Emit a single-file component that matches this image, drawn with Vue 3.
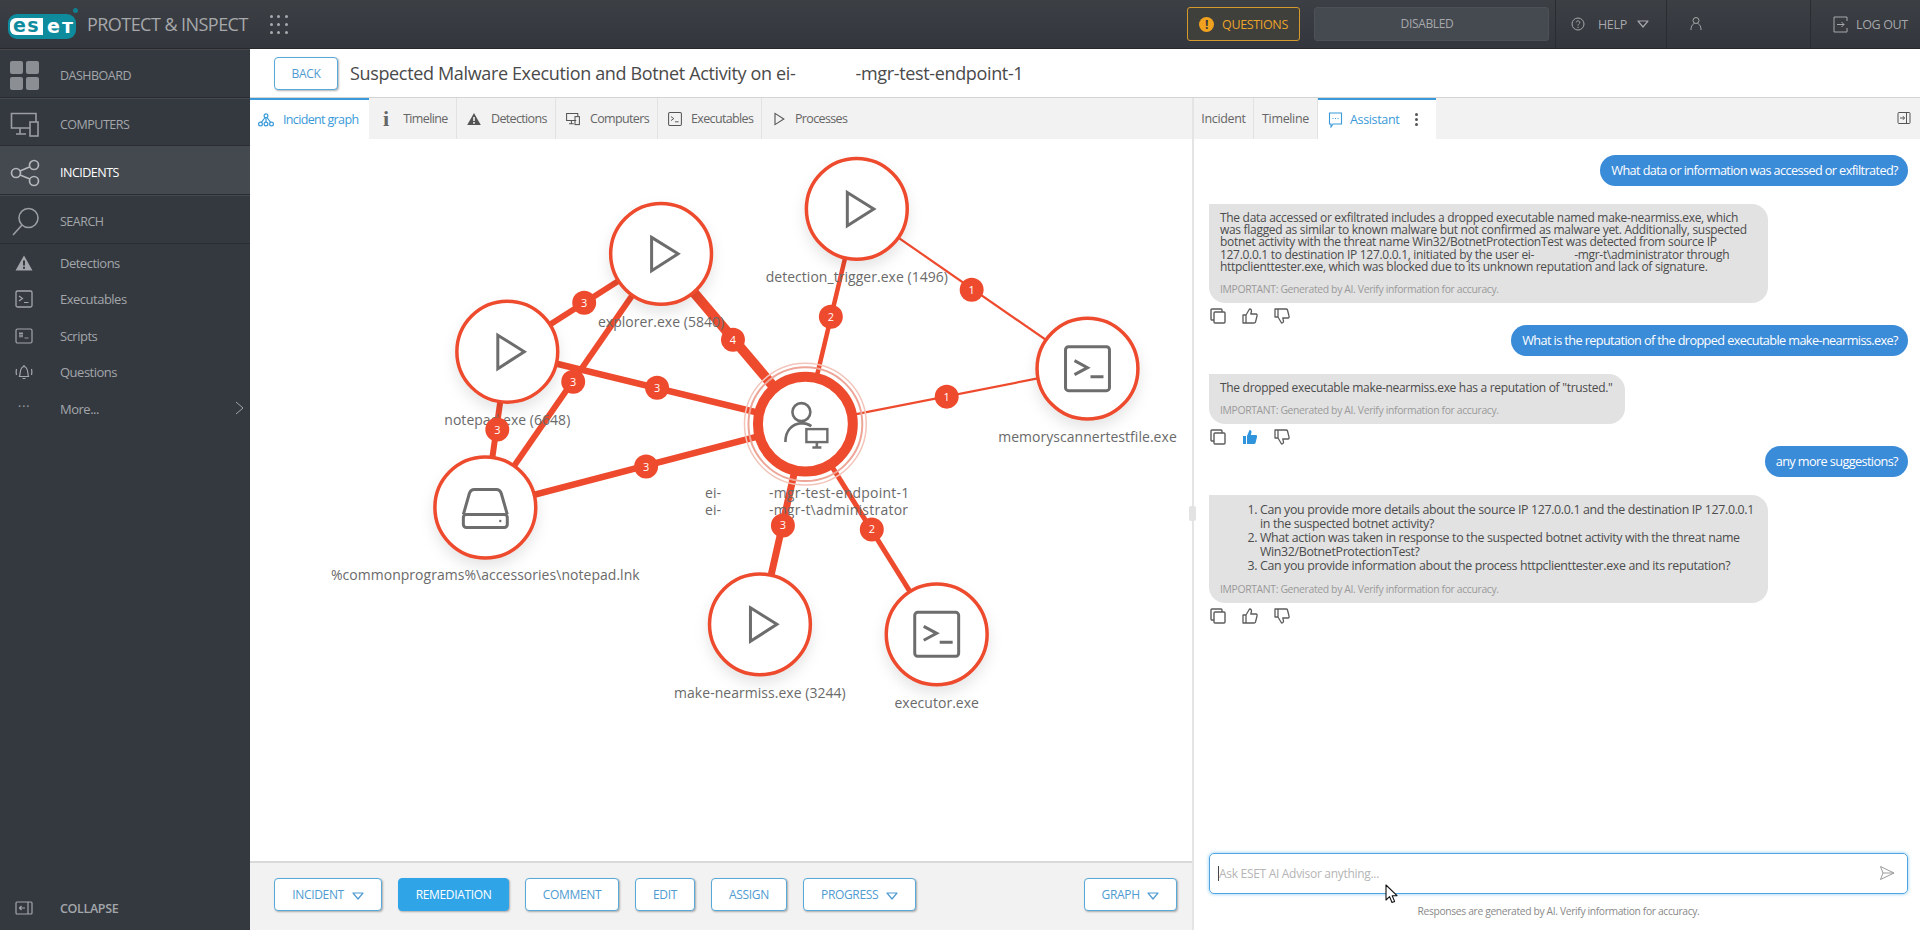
<template>
  <div class="app">
    <!-- shared icons -->
    <svg class="sprite" aria-hidden="true">
      <symbol id="i-alert" viewBox="0 0 20 20"><path d="M10 2.5 L18.5 17.5 H1.5 Z" fill="currentColor" /><path d="M10 7.5 V12.5 M10 13.8 V15.8" stroke="var(--ex, #fff)" stroke-width="2" /></symbol>
      <symbol id="i-term" viewBox="0 0 20 20"><rect x="2" y="2" width="16" height="16" rx="1.5" fill="none" stroke="currentColor" stroke-width="1.3" /><path d="M5 7 L8.5 9.5 L5 12 M10 13.5 H14.5" fill="none" stroke="currentColor" stroke-width="1.2" /></symbol>
      <symbol id="i-computers" viewBox="0 0 20 20"><path d="M14 12 H2 V3 H16 V7 M5 16 H11 M8 12 V16" fill="none" stroke="currentColor" stroke-width="1.3" /><rect x="12.5" y="7" width="5.5" height="10" fill="none" stroke="currentColor" stroke-width="1.3" /></symbol>
      <symbol id="i-play" viewBox="0 0 20 20"><path d="M5 3 L16 10 L5 17 Z" fill="none" stroke="currentColor" stroke-width="1.4" /></symbol>
      <symbol id="i-copy" viewBox="0 0 18 18"><rect x="5" y="5" width="11" height="11" rx="1" fill="#fff" stroke="currentColor" stroke-width="1.4" /><path d="M5 13 H3 a1 1 0 0 1 -1 -1 V3 a1 1 0 0 1 1 -1 H12 a1 1 0 0 1 1 1 V5" fill="none" stroke="currentColor" stroke-width="1.4" /></symbol>
      <symbol id="i-like" viewBox="0 0 18 18"><path d="M2 8 H5 V16 H2 Z M5 8 L8.5 2 C10.5 2 10.8 3.5 10.3 5 L9.8 7 H15 C16 7 16.3 8 16 9 L14.5 15 C14.3 15.7 13.8 16 13 16 H5" fill="none" stroke="currentColor" stroke-width="1.3" stroke-linejoin="round" /></symbol>
      <symbol id="i-like-on" viewBox="0 0 18 18"><path d="M2 8 H5 V16 H2 Z M6 8 L8.5 2 C10.5 2 10.8 3.5 10.3 5 L9.8 7 H15 C16 7 16.3 8 16 9 L14.5 15 C14.3 15.7 13.8 16 13 16 H6 Z" fill="currentColor" /></symbol>
      <symbol id="i-down" viewBox="0 0 12 8"><path d="M1 1 H11 L6 7 Z" fill="none" stroke="currentColor" stroke-width="1.2" stroke-linejoin="round" /></symbol>
    </svg>

    <header class="topbar">
      <div class="logo">
        <span class="logo-white">es</span><span class="logo-rest">eт</span>
        <i class="logo-r"></i>
      </div>
      <span class="product">PROTECT &amp; INSPECT</span>
      <div class="waffle"><i v-for="n in 9" :key="n"></i></div>

      <button class="questions">
        <span class="q-dot">!</span>
        QUESTIONS
      </button>
      <div class="disabled-box">DISABLED</div>
      <div class="top-cell cell-help">
        <svg width="14" height="14" viewBox="0 0 14 14"><circle cx="7" cy="7" r="6" fill="none" stroke="currentColor" /><path d="M5.2 5.4 C5.2 3.4 8.8 3.4 8.8 5.4 C8.8 6.8 7 6.8 7 8.6 M7 9.8 V11" fill="none" stroke="currentColor" /></svg>
        <span>HELP</span>
        <svg class="caret" width="12" height="8"><use href="#i-down" /></svg>
      </div>
      <div class="top-cell cell-user">
        <svg width="12" height="16" viewBox="0 0 12 16"><circle cx="6" cy="4.5" r="3" fill="none" stroke="currentColor" /><path d="M1 14 C1 9.5 3 8 4.5 7.4 M11 14 C11 9.5 9 8 7.5 7.4" fill="none" stroke="currentColor" /></svg>
      </div>
      <div class="top-cell cell-logout">
        <svg width="15" height="17" viewBox="0 0 15 17"><path d="M14 5 V1 H1 V16 H14 V12" fill="none" stroke="currentColor" /><path d="M4 8.5 H11 M8.5 6 L11 8.5 L8.5 11" fill="none" stroke="currentColor" /></svg>
        <span>LOG OUT</span>
      </div>
    </header>

    <div class="body">
      <aside class="sidebar">
        <a class="nav-main">
          <svg class="nav-big" width="30" height="30" viewBox="0 0 30 30"><g fill="#8b8e93"><rect width="13" height="13" rx="2" /><rect x="16" width="13" height="13" rx="2" /><rect y="16" width="13" height="13" rx="2" /><rect x="16" y="16" width="13" height="13" rx="2" /></g></svg>
          DASHBOARD
        </a>
        <a class="nav-main">
          <svg class="nav-big" width="30" height="30" viewBox="0 0 30 30"><g fill="none" stroke="#9a9da1" stroke-width="1.6"><path d="M20 18 H1.5 V3.5 H26 V12 M6 24 H16 M10 18 V24" /><rect x="20" y="12" width="8" height="14" /></g></svg>
          COMPUTERS
        </a>
        <a class="nav-main active">
          <svg class="nav-big" width="30" height="30" viewBox="0 0 30 30"><g fill="none" stroke="#b4b6b9" stroke-width="1.7"><circle cx="6" cy="15" r="4.5" /><circle cx="24" cy="7" r="4.5" /><circle cx="24" cy="23" r="4.5" /><path d="M10 13 L20 8.8 M10 17 L20 21" /></g></svg>
          INCIDENTS
        </a>
        <a class="nav-main">
          <svg class="nav-big" width="30" height="30" viewBox="0 0 30 30"><g fill="none" stroke="#9a9da1" stroke-width="1.6"><circle cx="18.5" cy="11" r="9.5" /><path d="M12 18 L3 28" /></g></svg>
          SEARCH
        </a>
        <a class="nav-sub">
          <svg class="nav-small" width="20" height="20"><use href="#i-alert" /></svg>
          Detections
        </a>
        <a class="nav-sub">
          <svg class="nav-small" width="20" height="20"><use href="#i-term" /></svg>
          Executables
        </a>
        <a class="nav-sub">
          <svg class="nav-small" width="20" height="20" viewBox="0 0 20 20"><rect x="2" y="3" width="16" height="14" rx="1.5" fill="none" stroke="currentColor" stroke-width="1.2" /><path d="M5 7.5 H9 M5 10 H9 M6 6 V11.5 M8 6 V11.5 M10.5 12 H14.5" fill="none" stroke="currentColor" stroke-width=".9" /></svg>
          Scripts
        </a>
        <a class="nav-sub">
          <svg class="nav-small" width="20" height="20" viewBox="0 0 20 20"><g fill="none" stroke="currentColor" stroke-width="1.2"><path d="M5.5 14.5 C6.5 12 5.5 5 10 4.5 C14.5 5 13.5 12 14.5 14.5 Z" /><path d="M10 3 V4.5 M8.5 16.5 H11.5 M2.5 7 C2 9 2 11 2.5 13 M17.5 7 C18 9 18 11 17.5 13" /></g></svg>
          Questions
        </a>
        <a class="nav-sub">
          <span class="nav-small dots">···</span>
          More...
          <svg class="chev" width="9" height="14" viewBox="0 0 9 14"><path d="M1 1 L8 7 L1 13" fill="none" stroke="currentColor" /></svg>
        </a>
        <a class="nav-collapse">
          <svg class="nav-small" width="20" height="20" viewBox="0 0 20 20"><g fill="none" stroke="currentColor" stroke-width="1.2"><rect x="2" y="4" width="16" height="12" rx="1" /><path d="M14 4 V16 M11 10 H5.5 M7.5 8 L5.5 10 L7.5 12" /></g></svg>
          COLLAPSE
        </a>
      </aside>

      <main class="main">
        <div class="titlebar">
          <button class="btn back">BACK</button>
          <h1>Suspected Malware Execution and Botnet Activity on ei-<span class="gap-title"></span>-mgr-test-endpoint-1</h1>
        </div>

        <div class="panes">
          <section class="left">
            <nav class="tabs">
              <a class="tab active t-graph">
                <svg width="16" height="14" viewBox="0 0 16 14"><g fill="none" stroke="currentColor" stroke-width="1.2"><circle cx="8" cy="2.8" r="1.9" /><circle cx="2.5" cy="11" r="1.9" /><circle cx="8" cy="11" r="1.9" /><circle cx="13.5" cy="11" r="1.9" /><path d="M7 4.5 L3.4 9.3 M8 4.6 V9.2 M9 4.5 L12.6 9.3" /></g></svg>
                Incident graph
              </a>
              <a class="tab t-time"><span class="info-i">i</span>Timeline</a>
              <a class="tab t-det"><svg class="tab-ic" width="16" height="16"><use href="#i-alert" /></svg>Detections</a>
              <a class="tab t-comp"><svg class="tab-ic" width="16" height="16"><use href="#i-computers" /></svg>Computers</a>
              <a class="tab t-exe"><svg class="tab-ic" width="16" height="16"><use href="#i-term" /></svg>Executables</a>
              <a class="tab t-proc"><svg class="tab-ic" width="16" height="16"><use href="#i-play" /></svg>Processes</a>
            </nav>

            <div class="graph">
              <svg class="graph-svg" viewBox="250 138 942 723">
                <line v-for="(e, i) in edges" :key="'e' + i" :x1="e[0]" :y1="e[1]" :x2="e[2]" :y2="e[3]" :stroke-width="e[4]" stroke="#ee4a2d" />

                <circle cx="805.5" cy="423.5" r="61" fill="none" stroke="#f3c4ba" stroke-width="1.5" />
                <circle cx="805.5" cy="423.5" r="57" fill="none" stroke="#eea597" stroke-width="2" />
                <circle cx="805.5" cy="423.5" r="47.5" fill="#fff" stroke="#ee4a2d" stroke-width="10" />
                <g transform="translate(805.5 423.5)" fill="none" stroke="#6d6d6d" stroke-width="2.6">
                  <circle cx="-4" cy="-12" r="9" />
                  <path d="M-20 18 C-20 6 -13 0 -4 -1 C0 -1 3 0 6 2" />
                  <rect x="1" y="5" width="21" height="13" stroke-width="2.4" fill="#fff" />
                  <path d="M11.5 18 V23 M7 23.5 H16" />
                </g>

                <g v-for="n in nodes" :key="n.label">
                  <circle class="node" :cx="n.x" :cy="n.y" r="50.5" />
                  <g :transform="`translate(${n.x} ${n.y})`" fill="none" stroke="#6d6d6d" stroke-width="3">
                    <path v-if="n.icon === 'play'" d="M-9.5 -16.5 L17 0 L-9.5 17 Z" />
                    <g v-else-if="n.icon === 'term'">
                      <rect x="-22" y="-22" width="44" height="44" rx="3" />
                      <path d="M-13 -8 L0 -1 L-13 6 M3 8 H16" />
                    </g>
                    <g v-else stroke-linejoin="round">
                      <path d="M-22 7 L-16 -14 C-15 -17 -14 -18 -11 -18 H11 C14 -18 15 -17 16 -14 L22 7" />
                      <rect x="-22" y="7" width="44" height="13" rx="3" />
                      <circle cx="15" cy="13.5" r="1.2" fill="#6d6d6d" stroke="none" />
                    </g>
                  </g>
                  <text class="node-label" :x="n.x" :y="n.ly" text-anchor="middle">{{ n.label }}</text>
                </g>

                <text class="node-label" x="705" y="498">ei-</text>
                <text class="node-label wider" x="769" y="498">-mgr-test-endpoint-1</text>
                <text class="node-label" x="705" y="515">ei-</text>
                <text class="node-label wider" x="769" y="515">-mgr-t\administrator</text>

                <g v-for="(b, i) in badges" :key="'b' + i">
                  <circle :cx="b[0]" :cy="b[1]" r="12" fill="#ee4a2d" />
                  <text class="badge-num" :x="b[0]" :y="b[1] + 4" text-anchor="middle">{{ b[2] }}</text>
                </g>
              </svg>
            </div>

            <div class="actions">
              <button class="btn btn-act a-inc">INCIDENT <svg width="12" height="8"><use href="#i-down" /></svg></button>
              <button class="btn btn-act primary a-rem">REMEDIATION</button>
              <button class="btn btn-act a-com">COMMENT</button>
              <button class="btn btn-act a-edit">EDIT</button>
              <button class="btn btn-act a-ass">ASSIGN</button>
              <button class="btn btn-act a-pro">PROGRESS <svg width="12" height="8"><use href="#i-down" /></svg></button>
              <button class="btn btn-act a-gra">GRAPH <svg width="12" height="8"><use href="#i-down" /></svg></button>
            </div>
          </section>

          <section class="right">
            <nav class="tabs">
              <a class="tab t-r1">Incident</a>
              <a class="tab t-r2">Timeline</a>
              <a class="tab active t-r3">
                <svg width="15" height="16" viewBox="0 0 15 16"><path d="M1.5 1 H13.5 V12 H5 L3 15 V12 H1.5 Z" fill="none" stroke="currentColor" stroke-width="1.1" /><path d="M4.5 6.5 H5.5 M7 6.5 H8 M9.5 6.5 H10.5" stroke="currentColor" /></svg>
                Assistant
                <span class="kebab"><i></i><i></i><i></i></span>
              </a>
              <svg class="pane-toggle" width="14" height="14" viewBox="0 0 14 14"><g fill="none" stroke="#555" stroke-width="1"><rect x="1" y="1.5" width="12" height="11" rx="1" /><path d="M9.5 1.5 V12.5 M3 7 H7.5 M6 5.2 L7.5 7 L6 8.8" /></g></svg>
            </nav>

            <div class="chat">
              <div class="msg-user">What data or information was accessed or exfiltrated?</div>
              <div class="msg-ai wide">
                <p>The data accessed or exfiltrated includes a dropped executable named make-nearmiss.exe, which was flagged as similar to known malware but not confirmed as malware yet. Additionally, suspected botnet activity with the threat name Win32/BotnetProtectionTest was detected from source IP 127.0.0.1 to destination IP 127.0.0.1, initiated by the user ei-<span class="gap-chat"></span>-mgr-t\administrator through httpclienttester.exe, which was blocked due to its unknown reputation and lack of signature.</p>
                <small>IMPORTANT: Generated by AI. Verify information for accuracy.</small>
              </div>
              <div class="feedback">
                <svg width="18" height="18"><use href="#i-copy" /></svg>
                <svg width="18" height="18"><use href="#i-like" /></svg>
                <svg class="flip" width="18" height="18"><use href="#i-like" /></svg>
              </div>

              <div class="msg-user">What is the reputation of the dropped executable make-nearmiss.exe?</div>
              <div class="msg-ai">
                <p>The dropped executable make-nearmiss.exe has a reputation of "trusted."</p>
                <small>IMPORTANT: Generated by AI. Verify information for accuracy.</small>
              </div>
              <div class="feedback">
                <svg width="18" height="18"><use href="#i-copy" /></svg>
                <svg class="liked" width="18" height="18"><use href="#i-like-on" /></svg>
                <svg class="flip" width="18" height="18"><use href="#i-like" /></svg>
              </div>

              <div class="msg-user">any more suggestions?</div>
              <div class="msg-ai wide">
                <ol>
                  <li>Can you provide more details about the source IP 127.0.0.1 and the destination IP 127.0.0.1 in the suspected botnet activity?</li>
                  <li>What action was taken in response to the suspected botnet activity with the threat name Win32/BotnetProtectionTest?</li>
                  <li>Can you provide information about the process httpclienttester.exe and its reputation?</li>
                </ol>
                <small>IMPORTANT: Generated by AI. Verify information for accuracy.</small>
              </div>
              <div class="feedback">
                <svg width="18" height="18"><use href="#i-copy" /></svg>
                <svg width="18" height="18"><use href="#i-like" /></svg>
                <svg class="flip" width="18" height="18"><use href="#i-like" /></svg>
              </div>
            </div>

            <div class="composer">
              <div class="input">
                <span class="caret-bar"></span>
                <span class="placeholder">Ask ESET AI Advisor anything...</span>
                <svg class="send" width="16" height="16" viewBox="0 0 16 16"><path d="M1.5 1.5 L15 8 L1.5 14.5 L4 8 Z M4 8 H15" fill="none" stroke="#9a9a9a" stroke-width="1" stroke-linejoin="round" /></svg>
              </div>
              <p class="disclaimer">Responses are generated by AI. Verify information for accuracy.</p>
            </div>
          </section>
          <span class="split-handle"></span>
        </div>
      </main>
    </div>

    <svg class="cursor" width="14" height="20" viewBox="0 0 14 20"><path d="M1 1 V16 L4.6 12.6 L7 18.5 L9.6 17.4 L7.2 11.8 L12 11.6 Z" fill="#fff" stroke="#111" stroke-width="1.1" stroke-linejoin="round" /></svg>
  </div>
</template>

<script setup>
// page coordinates, the graph svg viewBox starts at 250,138
const center = [805.5, 423.5]

const nodes = [
  { label: 'explorer.exe (5840)', x: 661, y: 253, ly: 326, icon: 'play' },
  { label: 'notepad.exe (6648)', x: 507, y: 351, ly: 424, icon: 'play' },
  { label: '%commonprograms%\\accessories\\notepad.lnk', x: 485, y: 507, ly: 580, icon: 'drive' },
  { label: 'detection_trigger.exe (1496)', x: 857, y: 208, ly: 281, icon: 'play' },
  { label: 'memoryscannertestfile.exe', x: 1088, y: 368, ly: 441, icon: 'term' },
  { label: 'make-nearmiss.exe (3244)', x: 760, y: 624, ly: 698, icon: 'play' },
  { label: 'executor.exe', x: 937, y: 634, ly: 708, icon: 'term' }
]

const edges = [
  [661, 253, 507, 351, 6],
  [661, 253, 485, 507, 6],
  [507, 351, 805.5, 423.5, 6.5],
  [507, 351, 485, 507, 6],
  [485, 507, ...center, 6.5],
  [661, 253, ...center, 10],
  [857, 208, ...center, 4.5],
  [857, 208, 1088, 368, 2.2],
  [1088, 368, ...center, 2.2],
  [760, 624, ...center, 7],
  [937, 634, ...center, 5]
]

const badges = [
  [584, 302, 3],
  [573, 381, 3],
  [657, 387, 3],
  [497, 429, 3],
  [646, 466, 3],
  [733, 339, 4],
  [831, 316, 2],
  [972, 289, 1],
  [947, 396, 1],
  [783, 525, 3],
  [872, 529, 2]
]
</script>

<style>
html, body {
  margin: 0;
  height: 100%;
  overflow: hidden;
  background: #fff;
}
</style>

<style scoped>
.app {
  position: relative;
  width: 1920px;
  height: 930px;
  display: flex;
  flex-direction: column;
  font-family: "Open Sans", "Noto Sans", sans-serif;
  font-size: 12px;
  letter-spacing: -0.35px;
  color: #555;
  overflow: hidden;
}
.sprite {
  position: absolute;
  width: 0;
  height: 0;
}
button {
  font-family: inherit;
  letter-spacing: inherit;
  cursor: pointer;
}

/* top bar */
.topbar {
  flex: 0 0 49px;
  display: flex;
  align-items: center;
  background: linear-gradient(#3c3f44, #33363c);
  border-bottom: 1px solid #26282c;
  box-sizing: border-box;
  color: #a6a8ab;
}
.logo {
  position: relative;
  margin-left: 8px;
  width: 68px;
  height: 25px;
  margin-top: 4px;
  border-radius: 9px;
  background: #0f8b9e;
  display: flex;
  align-items: center;
  font-family: "DejaVu Sans", sans-serif;
  font-weight: 700;
  font-size: 19px;
  letter-spacing: 0;
}
.logo-white {
  width: 33px;
  margin-left: 2px;
  height: 17px;
  line-height: 15px;
  background: #fff;
  color: #0f8b9e;
  text-align: center;
  letter-spacing: 1.5px;
  border-radius: 6px 0 0 6px;
}
.logo-rest {
  margin-left: 4px;
  line-height: 16px;
  color: #fff;
  letter-spacing: 2px;
}
.logo-r {
  position: absolute;
  right: -2px;
  top: -6px;
  width: 5px;
  height: 5px;
  border-radius: 50%;
  background: #0f7f90;
}
.product {
  margin-left: 11px;
  font-size: 18px;
  letter-spacing: -0.55px;
  color: #a6a8ab;
}
.waffle {
  margin-left: 22px;
  width: 18px;
  display: grid;
  grid-template-columns: repeat(3, 3px);
  justify-content: space-between;
  row-gap: 5px;
}
.waffle i {
  height: 3px;
  border-radius: 50%;
  background: #a8aaad;
}
.questions {
  margin-left: auto;
  width: 113px;
  height: 34px;
  display: flex;
  align-items: center;
  justify-content: center;
  gap: 8px;
  background: #3f3f3c;
  border: 1px solid #d59a2c;
  border-radius: 3px;
  color: #eba42a;
  font-size: 12.5px;
}
.q-dot {
  width: 15px;
  height: 15px;
  line-height: 15px;
  border-radius: 50%;
  background: #f0a21f;
  color: #33363c;
  font-weight: 700;
  font-size: 12px;
}
.disabled-box {
  margin-left: 14px;
  width: 235px;
  height: 34px;
  line-height: 32px;
  padding-right: 9px;
  text-align: center;
  background: #454950;
  border-radius: 3px;
  border: 1px solid #4c5057;
  box-sizing: border-box;
  font-size: 12px;
}
.top-cell {
  height: 48px;
  display: flex;
  align-items: center;
  border-left: 1px solid #2a2c30;
  box-sizing: border-box;
  font-size: 12.5px;
}
.cell-help {
  margin-left: 6px;
  width: 111px;
  padding-left: 15px;
  gap: 13px;
}
.cell-help .caret {
  margin-left: -3px;
}
.cell-user {
  width: 144px;
  padding-left: 23px;
}
.cell-logout {
  width: 110px;
  padding-left: 22px;
  gap: 8px;
}

/* side navigation */
.body {
  flex: 1;
  min-height: 0;
  display: flex;
}
.sidebar {
  flex: 0 0 250px;
  background: #343940;
  display: flex;
  flex-direction: column;
  color: #a3a6aa;
}
.nav-main {
  position: relative;
  flex: 0 0 48.7px;
  box-sizing: border-box;
  display: flex;
  align-items: center;
  padding: 4px 0 0 60px;
  border-top: 1px solid #45494f;
  border-bottom: 1px solid #292c31;
  font-size: 12.5px;
  letter-spacing: -0.5px;
}
.nav-main.active {
  background: #44484f;
  color: #fff;
}
.nav-big {
  position: absolute;
  left: 10px;
  top: 11px;
}
.nav-sub {
  position: relative;
  flex: 0 0 36.4px;
  display: flex;
  align-items: center;
  padding-left: 60px;
  font-size: 13px;
  letter-spacing: -0.5px;
}
.nav-sub:nth-child(5) {
  margin-top: 1px;
}
.nav-small {
  position: absolute;
  left: 14px;
  top: 8px;
  color: #a3a6aa;
  --ex: #343940;
}
.dots {
  left: 18px;
  font-size: 12px;
  letter-spacing: 1px;
}
.chev {
  position: absolute;
  left: 235px;
  top: 11px;
}
.nav-collapse {
  position: relative;
  margin-top: auto;
  height: 44px;
  display: flex;
  align-items: center;
  padding-left: 60px;
  font-weight: 600;
  font-size: 12.5px;
}
.nav-collapse .nav-small {
  top: 12px;
}

/* title row */
.main {
  flex: 1;
  min-width: 0;
  display: flex;
  flex-direction: column;
}
.titlebar {
  flex: 0 0 49px;
  box-sizing: border-box;
  display: flex;
  align-items: center;
  padding-left: 24px;
  border-bottom: 1px solid #d4d4d4;
}
.titlebar h1 {
  margin: 0 0 0 12px;
  font-weight: 400;
  font-size: 18px;
  letter-spacing: -0.35px;
  color: #4a4a4a;
}
.gap-title {
  display: inline-block;
  width: 60px;
}
.btn {
  background: #fff;
  border: 1px solid #58a9d8;
  border-radius: 4px;
  color: #4f9bd1;
  font-size: 12px;
  box-shadow: 1px 1px 2px rgba(0, 0, 0, 0.3);
}
.back {
  width: 64px;
  height: 33px;
}

.panes {
  position: relative;
  flex: 1;
  min-height: 0;
  display: flex;
}
.left {
  flex: 0 0 942px;
  display: flex;
  flex-direction: column;
}
.right {
  flex: 1;
  min-width: 0;
  display: flex;
  flex-direction: column;
  border-left: 2px solid #e4e4e4;
}
.split-handle {
  position: absolute;
  left: 939px;
  top: 408px;
  width: 7px;
  height: 15px;
  border-radius: 2px;
  background: #e3e3e3;
}

/* tabs */
.tabs {
  position: relative;
  flex: 0 0 41px;
  display: flex;
  background: #f2f2f2;
  box-sizing: border-box;
}
.tab {
  display: flex;
  align-items: center;
  gap: 8px;
  box-sizing: border-box;
  height: 41px;
  border-right: 1px solid #e2e2e2;
  font-size: 12.5px;
  letter-spacing: -0.65px;
  color: #666;
}
.tab.active {
  background: #fff;
  color: #3a9ad9;
  border-top: 2px solid #3a9ad9;
  border-right: 0;
}
.t-graph { width: 119px; padding-left: 8px; gap: 9px; }
.t-time { width: 88px; padding-left: 14px; gap: 7px; }
.t-det { width: 99px; padding-left: 9px; gap: 9px; }
.t-comp { width: 102px; padding-left: 9px; gap: 9px; }
.t-exe { width: 104px; padding-left: 9px; }
.t-proc { width: 98px; padding-left: 9px; border-right: 0; }
.t-r1 { width: 60px; justify-content: center; letter-spacing: -0.35px; }
.t-r2 { width: 64px; justify-content: center; letter-spacing: -0.35px; }
.t-r3 { width: 118px; padding-left: 10px; gap: 7px; letter-spacing: -0.35px; }
.tab-ic {
  color: #555;
  --ex: #f2f2f2;
}
.info-i {
  font-family: "Liberation Serif", serif;
  font-weight: 700;
  font-size: 22px;
  letter-spacing: 0;
  margin-right: 7px;
  line-height: 1;
}
.kebab {
  display: flex;
  flex-direction: column;
  gap: 2px;
  margin-left: 9px;
}
.kebab i {
  width: 3px;
  height: 3px;
  border-radius: 50%;
  background: #555;
}
.pane-toggle {
  position: absolute;
  right: 9px;
  top: 13px;
}

/* graph */
.graph {
  flex: 1;
  min-height: 0;
  position: relative;
}
.graph-svg {
  position: absolute;
  inset: 0;
  width: 100%;
  height: 100%;
}
.node {
  fill: #fff;
  stroke: #ee4a2d;
  stroke-width: 3.5;
  filter: drop-shadow(0 7px 7px rgba(0, 0, 0, 0.1));
}
.node-label {
  font-size: 14px;
  letter-spacing: 0.05px;
  fill: #6a6a6a;
}
.node-label.wider {
  letter-spacing: 0.25px;
}
.badge-num {
  font-size: 11px;
  letter-spacing: 0;
  fill: #fff;
}

/* action bar */
.actions {
  flex: 0 0 69px;
  box-sizing: border-box;
  display: flex;
  align-items: flex-start;
  padding: 15px 0 0 24px;
  gap: 16px;
  background: #f2f2f2;
  border-top: 2px solid #d9d9d9;
}
.btn-act {
  height: 33px;
  padding: 0;
}
.btn-act svg {
  margin-left: 5px;
  vertical-align: -1px;
}
.primary {
  background: #2fa4e7;
  color: #fff;
  border-color: #2fa4e7;
}
.a-inc { width: 108px; }
.a-rem { width: 111px; }
.a-com { width: 94px; }
.a-edit { width: 60px; }
.a-ass { width: 76px; }
.a-pro { width: 113px; }
.a-gra { width: 93px; margin-left: auto; margin-right: 15px; }

/* chat */
.chat {
  flex: 1;
  min-height: 0;
  display: flex;
  flex-direction: column;
  padding: 16px 12px 0 15px;
}
.msg-user {
  align-self: flex-end;
  height: 31px;
  line-height: 30px;
  padding: 0 10px 0 11px;
  border-radius: 15.5px;
  background: #3a8bd8;
  color: #fff;
  font-size: 12.7px;
  letter-spacing: -0.6px;
  margin-bottom: 18px;
}
.msg-ai {
  align-self: flex-start;
  box-sizing: border-box;
  padding: 8px 12px 7px 11px;
  border-radius: 0 16px 16px 16px;
  background: #e2e2e2;
  color: #4c4c4c;
}
.msg-ai.wide {
  width: 559px;
}
.msg-ai p {
  margin: 0;
  line-height: 12.2px;
  font-size: 12px;
  letter-spacing: -0.3px;
}
.msg-ai ol {
  margin: 0;
  padding-left: 40px;
  line-height: 13.9px;
  font-size: 12.4px;
}
.msg-ai small {
  display: block;
  margin-top: 9px;
  line-height: 14px;
  font-size: 10.4px;
  color: #9a9a9a;
}
.gap-chat {
  display: inline-block;
  width: 40px;
}
.feedback {
  display: flex;
  gap: 14px;
  height: 18px;
  margin-top: 4px;
  color: #5c5c5c;
}
.feedback .flip {
  transform: rotate(180deg) scaleX(-1);
}
.feedback .liked {
  color: #2f94dc;
}

/* composer */
.composer {
  flex: 0 0 77px;
  padding: 0 12px 0 15px;
}
.input {
  position: relative;
  height: 41px;
  box-sizing: border-box;
  border: 1.5px solid #4ea5e2;
  border-radius: 5px;
  box-shadow: 0 0 3px 1px #b9def5;
  display: flex;
  align-items: center;
  padding-left: 8px;
}
.caret-bar {
  width: 1px;
  height: 15px;
  background: #444;
}
.placeholder {
  font-size: 12px;
  letter-spacing: -0.3px;
  color: #b5b5b5;
}
.send {
  position: absolute;
  right: 12px;
  top: 11px;
}
.disclaimer {
  margin: 10px 0 0;
  text-align: center;
  font-size: 10.3px;
  color: #8a8a8a;
}

.cursor {
  position: absolute;
  left: 1385px;
  top: 884px;
}
</style>
